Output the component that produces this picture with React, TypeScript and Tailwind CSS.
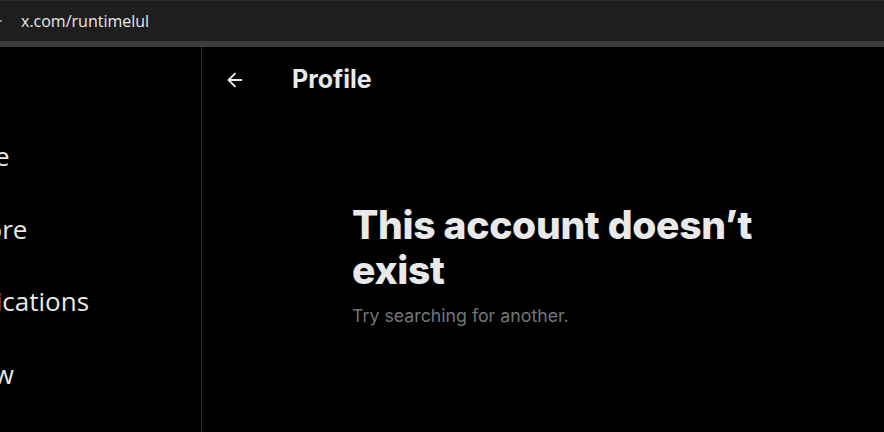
import { ArrowLeft } from "lucide-react";

const navItems = ["Home", "Explore", "Notifications", "Follow"];

export default function App() {
  return (
    <div className="flex h-[432px] w-[884px] flex-col overflow-hidden bg-black font-['Open_Sans',sans-serif]">
      <div className="flex h-[41px] shrink-0 items-center border-t border-[#2b2b2b] bg-[#1e1e1e]">
        <span className="ml-[-3px] mr-[19px] h-[2px] w-[5px] bg-[#8a8a8a]" />
        <span className="text-[16px] text-[#e8e8e8]">x.com/runtimelul</span>
      </div>
      <div className="h-[6px] shrink-0 bg-[#3c3c3c]" />

      <div className="flex min-h-0 flex-1">
        <nav className="flex w-[202px] shrink-0 flex-col overflow-hidden border-r border-[#2f3336] pt-[93px]">
          {navItems.map((item) => (
            <div className="ml-[-64px] flex h-[72.7px] shrink-0 items-start whitespace-nowrap" key={item}>
              <span className="text-[26px] leading-[32px] text-[#e7e9ea]">{item}</span>
            </div>
          ))}
        </nav>

        <main className="flex min-w-0 flex-1 flex-col">
          <header className="flex h-[66px] shrink-0 items-center px-[22px]">
            <ArrowLeft className="size-[22px] text-[#e7e9ea]" strokeWidth={2} />
            <h2 className="ml-[46px] font-['Inter',sans-serif] text-[25px] font-bold text-[#e7e9ea]">
              Profile
            </h2>
          </header>

          <section className="pl-[150px] pt-[89px]">
            <h1 className="font-['Inter',sans-serif] text-[39px] font-extrabold leading-[45px] tracking-[-0.3px] text-[#e7e9ea]">
              This account doesn’t
              <br />
              exist
            </h1>
            <p className="mt-[11px] font-['Inter',sans-serif] text-[17.75px] leading-[25px] text-[#71767b]">
              Try searching for another.
            </p>
          </section>
        </main>
      </div>
    </div>
  );
}
